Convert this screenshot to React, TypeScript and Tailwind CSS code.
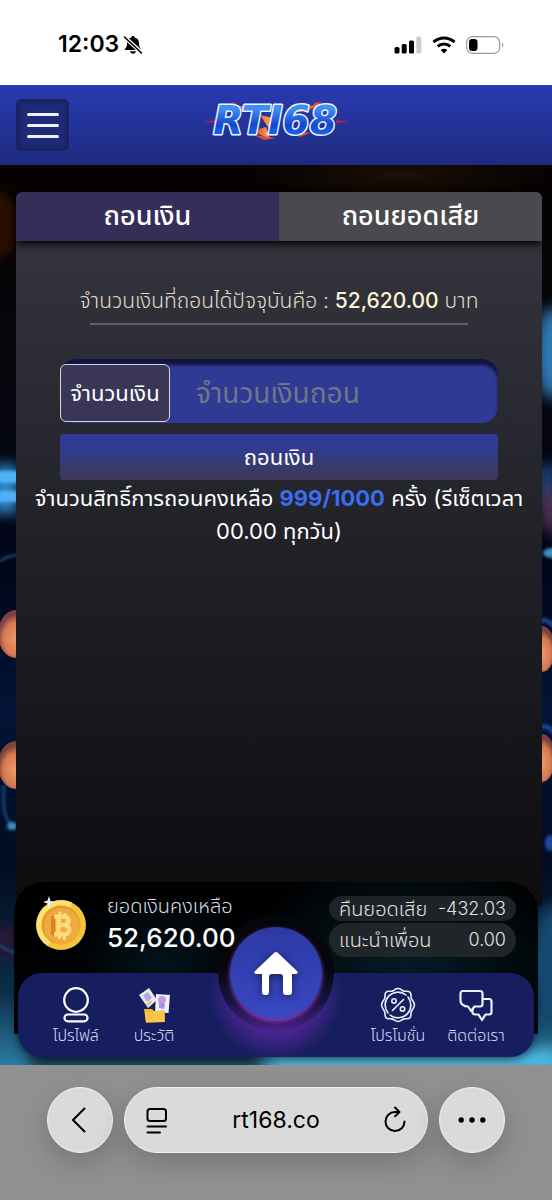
import { useState, type ReactNode } from 'react'

type NavItemProps = {
  label: string
  children: ReactNode
}

function StatusBar() {
  return (
    <div className="flex h-[85px] items-center justify-between bg-white pt-1 pr-12 pl-[58px] text-black">
      <div className="flex items-center gap-1">
        <span className="font-['Inter',sans-serif] text-[23px] font-semibold">12:03</span>
        <svg className="size-5" viewBox="0 0 20 20" fill="currentColor">
          <path d="M10 1c.9 0 1.6.6 1.7 1.4C14.5 3.1 16 5.3 16 8.3c0 3.4 1.1 4.7 2 5.6.4.4.2 1.1-.4 1.1H2.4c-.6 0-.8-.7-.4-1.1.9-.9 2-2.2 2-5.600 0-3 1.5-5.200 4.300-5.900C8.400 1.600 9.100 1 10 1zM7 16.200h6c-.3 1.500-1.500 2.500-3 2.500s-2.700-1-3-2.500z" />
          <path d="M1 1.5 19 18" stroke="#fff" strokeWidth="4" />
          <path d="M1.5 2 18.5 18" stroke="currentColor" strokeWidth="1.6" strokeLinecap="round" />
        </svg>
      </div>
      <div className="flex items-center gap-2.5">
        <svg className="h-[18px] w-7" viewBox="0 0 28 18" fill="currentColor">
          <rect x="0.5" y="11" width="5" height="6.5" rx="1.6" />
          <rect x="7.7" y="8" width="5" height="9.5" rx="1.6" />
          <rect x="15" y="4.5" width="5" height="13" rx="1.6" />
          <rect x="22.3" y="0.5" width="5" height="17" rx="1.6" opacity="0.2" />
        </svg>
        <svg className="h-[18px] w-6" viewBox="0 0 24 18" fill="none" stroke="currentColor" strokeWidth="3">
          <path d="M1.5 6.2C7.5.7 16.5.7 22.5 6.2" />
          <path d="M5.7 10.4c3.7-3.2 8.9-3.2 12.600 0" />
          <path d="M12 17.5 8.6 14c2-1.7 4.8-1.7 6.8 0z" fill="currentColor" stroke="none" />
        </svg>
        <svg className="h-[18px] w-[38px]" viewBox="0 0 38 18" fill="none">
          <rect x="0.7" y="0.7" width="33" height="16.6" rx="5.5" stroke="#999" strokeWidth="1.2" />
          <rect x="3" y="3" width="8.5" height="12" rx="3" fill="#000" />
          <path d="M36 6.5c1.600.6 1.600 4.400 0 5z" fill="#999" />
        </svg>
      </div>
    </div>
  )
}

function Logo() {
  return (
    <svg className="h-12 w-[148px]" viewBox="0 0 148 48" role="img" aria-label="RTI68">
      <defs>
        <linearGradient id="logoFill" x1="0" y1="0" x2="0" y2="1">
          <stop offset="0.25" stopColor="#3f8df5" />
          <stop offset="0.6" stopColor="#1446cf" />
          <stop offset="0.85" stopColor="#1c6cf0" />
        </linearGradient>
        <linearGradient id="logoFire" x1="0" y1="0" x2="1" y2="0">
          <stop offset="0" stopColor="#c0283f" />
          <stop offset="0.5" stopColor="#ff9a3a" />
          <stop offset="1" stopColor="#c0283f" />
        </linearGradient>
      </defs>
      <g fill="url(#logoFire)">
        <path d="M34 4c0-3-3-3-5-3 3 5 8 6 14 7l16 5-9-7c-5-1-10 0-16-2z" />
        <path d="M36 8c6-3 14-2 28 0l-14 3z" />
        <path d="M112 4c0-3 3-3 8-3-3 5-10 6-15 7l-19 5 11-7c5-1 10 0 15-2z" />
        <path d="M112 8c-6-3-14-2-28 0l14 3z" />
        <path d="M0 21l14-2v3zM148 21l-14-2v3z" fill="#b5213f" />
        <path d="M50 30l18 8-4-12zM58 14l22 5-12 10z" />
        <path d="M52 34l22 3-12 2zM88 28l20 4-10 4z" fill="#d8503a" />
      </g>
      <text
        x="73"
        y="33"
        textAnchor="middle"
        fontFamily="DejaVu Sans"
        fontWeight="700"
        fontStyle="italic"
        fontSize="39"
        fill="url(#logoFill)"
        stroke="#e9f8ff"
        strokeWidth="3"
        strokeLinejoin="round"
        paintOrder="stroke"
      >
        RTI68
      </text>
    </svg>
  )
}

function Header() {
  return (
    <header className="relative flex h-20 items-center justify-center bg-linear-to-b from-[#283ab3] to-[#1f2b80]">
      <button
        type="button"
        aria-label="เมนู"
        className="absolute left-4 flex h-[52px] w-[53px] flex-col items-center justify-center gap-2 rounded-md bg-[#1f2a78] shadow-[inset_0_0_5px_3px_#192259]"
      >
        <span className="h-[3px] w-8 rounded-full bg-[#eceffd]" />
        <span className="h-[3px] w-8 rounded-full bg-[#eceffd]" />
        <span className="h-[3px] w-8 rounded-full bg-[#eceffd]" />
      </button>
      <a href="#">
        <Logo />
      </a>
    </header>
  )
}

function Backdrop() {
  return (
    <svg className="absolute inset-0 h-full w-full" viewBox="0 0 552 900" preserveAspectRatio="none" aria-hidden="true">
      <defs>
        <linearGradient id="sceneBase" x1="0" y1="0" x2="0" y2="1">
          <stop offset="0" stopColor="#060201" />
          <stop offset="0.22" stopColor="#06060c" />
          <stop offset="0.45" stopColor="#02061a" />
          <stop offset="0.6" stopColor="#021436" />
          <stop offset="0.78" stopColor="#030c22" />
          <stop offset="0.92" stopColor="#0b2f4a" />
          <stop offset="1" stopColor="#2b7ba2" />
        </linearGradient>
        <radialGradient id="chip" cx="0.5" cy="0.6">
          <stop offset="0" stopColor="#f09a6c" />
          <stop offset="0.7" stopColor="#d47850" />
          <stop offset="1" stopColor="#7c4240" />
        </radialGradient>
        <radialGradient id="ember">
          <stop offset="0" stopColor="#1c0f05" />
          <stop offset="1" stopColor="#1c0f05" stopOpacity="0" />
        </radialGradient>
        <filter id="soft" x="-50%" y="-50%" width="200%" height="200%">
          <feGaussianBlur stdDeviation="7" />
        </filter>
        <filter id="edge">
          <feGaussianBlur stdDeviation="1.5" />
        </filter>
      </defs>
      <rect width="552" height="900" fill="url(#sceneBase)" />
      <ellipse cx="400" cy="10" rx="150" ry="26" fill="url(#ember)" />
      <g filter="url(#soft)">
        <ellipse cx="-2" cy="60" rx="20" ry="34" fill="#2a0e02" />
        <ellipse cx="552" cy="188" rx="16" ry="46" fill="#2f7ab5" />
        <rect x="-8" y="300" width="26" height="48" fill="#2f8ad0" />
        <rect x="536" y="300" width="22" height="40" fill="#123f78" />
        <ellipse cx="552" cy="345" rx="12" ry="24" fill="#4b3350" />
        <ellipse cx="4" cy="776" rx="12" ry="18" fill="#2a1830" />
        <ellipse cx="552" cy="800" rx="20" ry="60" fill="#174a70" />
        <rect x="270" y="884" width="290" height="24" fill="#4fb8dd" />
        <rect x="30" y="884" width="230" height="20" fill="#12384e" />
      </g>
      <g filter="url(#edge)">
        <rect x="-2" y="306" width="20" height="12" fill="#4fb0f5" />
        <rect x="-2" y="326" width="20" height="11" fill="#4fb0f5" />
        <path d="M0 396c6-4 12-6 18-6M0 780c8 6 12 7 18 8M4 620c-2 30 2 36 12 44" stroke="#1f5c99" strokeWidth="2" fill="none" />
        <ellipse cx="552" cy="388" rx="9" ry="5" fill="#3d8fc0" />
        <path d="M540 456c6-2 10 0 14 6M540 562c6-2 10 0 14 6" stroke="#174aa0" strokeWidth="4" fill="none" />
        <ellipse cx="12" cy="661" rx="5" ry="4" fill="#3d8fc0" />
        <ellipse cx="550" cy="678" rx="5" ry="8" fill="#1c4a9c" />
      </g>
      <ellipse cx="16" cy="469" rx="18" ry="24" fill="url(#chip)" />
      <ellipse cx="16" cy="600" rx="18" ry="24" fill="url(#chip)" />
      <ellipse cx="542" cy="484" rx="13" ry="23" fill="url(#chip)" />
      <ellipse cx="542" cy="593" rx="13" ry="24" fill="url(#chip)" />
    </svg>
  )
}

function WithdrawPanel() {
  const [tab, setTab] = useState('withdraw')
  const [amount, setAmount] = useState('')

  return (
    <section className="relative mr-2.5 ml-4 flex flex-1 flex-col">
      <div className="relative flex h-[49px] overflow-hidden rounded-t-md text-[27px] text-white shadow-[0_3px_8px_#000]">
        <button
          type="button"
          onClick={() => setTab('withdraw')}
          className={tab === 'withdraw' ? 'flex-1 bg-[#332f59] font-medium' : 'flex-1 bg-[#4a494e] font-medium'}
        >
          ถอนเงิน
        </button>
        <button
          type="button"
          onClick={() => setTab('loss')}
          className={tab === 'loss' ? 'flex-1 bg-[#332f59] font-medium' : 'flex-1 bg-[#4a494e] font-medium'}
        >
          ถอนยอดเสีย
        </button>
      </div>
      <div className="flex-1 bg-linear-to-b from-[#34343e] via-[#212128] via-45% to-[#0d0d10] px-3 pt-10 text-center text-white">
        <p className="text-[21px] leading-10 font-light text-[#e4dccb]">
          จำนวนเงินที่ถอนได้ปัจจุบันคือ : <b className="font-medium text-[#fff3d6]">52,620.00</b> บาท
        </p>
        <form className="px-8" onSubmit={(e) => e.preventDefault()}>
          <hr className="mx-[30px] mt-0.5 border-t-2 border-[#5f5f68]" />
          <div className="mt-[34px] flex h-16 rounded-2xl bg-[#2e3a93] pt-[5px] pb-px shadow-[inset_0_6px_3px_#12143f]">
            <label
              htmlFor="amount"
              className="flex w-[110px] shrink-0 items-center justify-center rounded-md border border-[#d5d4e4] bg-[#3a3657] text-[22px]"
            >
              จำนวนเงิน
            </label>
            <input
              id="amount"
              inputMode="decimal"
              value={amount}
              onChange={(e) => setAmount(e.target.value)}
              placeholder="จำนวนเงินถอน"
              className="w-full min-w-0 bg-transparent px-[26px] text-[28px] outline-none placeholder:text-[#6f7685]"
            />
          </div>
          <button
            type="submit"
            className="mt-[11px] h-[46px] w-full rounded bg-linear-to-b from-[#2f3b97] from-20% to-[#3d3857] text-[22px]"
          >
            ถอนเงิน
          </button>
        </form>
        <p className="-mx-2 mt-0.5 px-2 text-[22px] leading-[33px]">
          จำนวนสิทธิ์การถอนคงเหลือ <b className="font-bold text-[#3b6df0]">999/1000</b> ครั้ง (รีเซ็ตเวลา 00.00 ทุกวัน)
        </p>
      </div>
    </section>
  )
}

function Coin() {
  return (
    <svg className="size-[54px]" viewBox="0 0 54 54" aria-hidden="true">
      <circle cx="27" cy="29" r="25" fill="#f3c53c" />
      <path d="M5 40A25 25 0 0 1 38 6.5L14 50A25 25 0 0 1 5 40z" fill="#fbe272" />
      <circle cx="27" cy="29" r="19.5" fill="#e8982c" />
      <circle cx="28" cy="30" r="18" fill="#f0aa3c" />
      <path d="M19 20v19M19 20h9M19 39h9" stroke="#d9822a" strokeWidth="4" fill="none" />
      <g stroke="#fcdc79" strokeWidth="4.5" fill="none">
        <path d="M20 20.500h10c6 0 6 8.500 0 8.500h-6M30 29c7 0 7 9.500 0 9.500H20M24.500 20v19" />
        <path d="M26 15.500v5M31 17v4M25.500 38v5M30.500 38v6" strokeWidth="3" />
      </g>
      <path d="M15 0l1.500 5L21 6l-4.500 1.500L15 13l-1.500-5.500L9 6l4.500-1.500z" fill="#f5ecff" />
    </svg>
  )
}

function NavItem({ label, children }: NavItemProps) {
  return (
    <a href="#" className="flex w-[78px] flex-col items-center text-[#d9dcf7]">
      {children}
      <span className="text-base leading-6 font-light whitespace-nowrap">{label}</span>
    </a>
  )
}

function BottomBar() {
  return (
    <footer className="relative -mt-6 px-3.5 pb-2 text-white">
      <div className="flex justify-between rounded-t-[30px] bg-[radial-gradient(circle_at_28%_60%,#03161e,transparent_22%),radial-gradient(circle_at_75%_75%,#07202b,transparent_40%)] bg-black/95 pt-3 pr-[22px] pb-[76px] pl-5">
        <div className="flex items-start gap-[19px]">
          <div className="pt-0.5">
            <Coin />
          </div>
          <div className="relative z-10">
            <p className="text-xl leading-6 font-light text-[#d8dbe0]">ยอดเงินคงเหลือ</p>
            <p className="text-[26px] leading-10 font-medium">52,620.00</p>
          </div>
        </div>
        <dl className="flex w-[187px] flex-col gap-0.5 pt-0.5 font-light text-[#e0e3e6]">
          <div className="flex h-[25px] items-center justify-between rounded-full bg-[#1f2226] px-2.5">
            <dt className="text-xl leading-6">คืนยอดเสีย</dt>
            <dd className="text-lg leading-6">-432.03</dd>
          </div>
          <div className="flex h-[34px] items-center justify-between rounded-full bg-[#1f2529] px-2.5">
            <dt className="text-xl leading-6">แนะนำเพื่อน</dt>
            <dd className="text-lg leading-6">0.00</dd>
          </div>
        </dl>
      </div>
      <nav className="relative mx-1 -mt-[61px] flex h-[84px] justify-between rounded-3xl bg-[#171e60] bg-[radial-gradient(circle_at_50%_20px,#4a2590_40px,transparent_66px)] px-[19px] pt-3.5 shadow-[0_2px_10px_#0009]">
        <div className="flex">
          <NavItem label="โปรไฟล์">
            <svg className="h-9 w-9" viewBox="0 0 36 36" fill="none" stroke="#fff" strokeWidth="2.2">
              <circle cx="18" cy="13" r="11.8" />
              <rect x="6.5" y="27.5" width="23" height="6.8" rx="3.4" />
            </svg>
          </NavItem>
          <NavItem label="ประวัติ">
            <svg className="h-9 w-9" viewBox="0 0 36 36">
              <path d="M3 8 13 1l8 12-9 8z" fill="#ece9f5" />
              <path d="M7 8.500l5-3.500 4 6-5 4z" fill="#b5a8dc" />
              <path d="m10 17 5-3.500 1 1.500-4 4z" fill="#e6bd7a" />
              <path d="m20 7 14 1-1.500 18L19 25z" fill="#f1eef8" />
              <circle cx="26" cy="13" r="4" fill="#c79adc" />
              <path d="M23 16c2-2 5-1 6 2l-1 4-5-1z" fill="#a98fe0" />
              <path d="M8 22h8l2 2h10l1 11-19 .5z" fill="#f2b632" />
              <path d="M9 25l20-2-.5 12-18.500.5z" fill="#fac546" />
            </svg>
          </NavItem>
        </div>
        <div className="flex">
          <NavItem label="โปรโมชั่น">
            <svg className="h-9 w-9" viewBox="0 0 36 36" fill="none" stroke="#eef0ff" strokeWidth="1.6" strokeLinecap="round" strokeLinejoin="round">
              <path d="M18 1.500c3 0 3.500 2 6 2.600 2.500.5 4.500-.6 6 1.200 1.700 1.900.5 3.700 1.400 6.200.8 2.300 3 3.300 3 6.500s-2.200 4.200-3 6.500c-.9 2.500.3 4.300-1.400 6.200-1.500 1.800-3.500.7-6 1.200-2.500.6-3 2.600-6 2.600s-3.500-2-6-2.600c-2.500-.5-4.500.6-6-1.200-1.700-1.900-.5-3.700-1.400-6.200-.8-2.300-3-3.300-3-6.500s2.200-4.200 3-6.500c.9-2.500-.3-4.300 1.400-6.200 1.500-1.800 3.500-.7 6-1.200 2.500-.6 3-2.600 6-2.600z" />
              <path d="M8 26A12.800 12.800 0 0 1 26 8M28 10A12.800 12.800 0 0 1 10 28" />
              <path d="M23.500 12.500l-11 11" />
              <circle cx="14" cy="14" r="2.2" />
              <circle cx="22.5" cy="22" r="2.2" />
            </svg>
          </NavItem>
          <NavItem label="ติดต่อเรา">
            <svg className="h-9 w-9" viewBox="0 0 36 36" fill="none" stroke="#eef0ff" strokeWidth="2.2" strokeLinejoin="round">
              <path d="M5 4h17c1.700 0 2.500 1 2.500 2.500V17c0 1.700-1 2.500-2.500 2.500h-5.500L13 24l-3-4.500C6 19.500 2.500 17 2.500 14V6.500C2.500 5 3.500 4 5 4z" />
              <path d="M24.500 12H31c1.700 0 2.500 1 2.500 2.500V25c0 1.700-1 2.500-2.500 2.500h-3.500L24 33l-3.500-5.500H17c-1.700 0-2.500-1-2.500-2.500v-3" />
            </svg>
          </NavItem>
        </div>
        <a
          href="#"
          aria-label="หน้าหลัก"
          className="absolute top-0 left-1/2 flex size-[116px] -translate-x-1/2 -translate-y-1/2 items-center justify-center rounded-full bg-linear-to-b from-[#05070d] from-45% via-[#14123c] via-72% to-[#4a2088]"
        >
          <span className="flex size-[92px] items-center justify-center rounded-full bg-linear-to-b from-[#2c39a4] to-[#3a48c4] shadow-[0_2px_4px_#9a3fc0]">
            <svg className="size-11 drop-shadow-[0_2px_4px_#0008]" viewBox="0 0 44 44" fill="#fff">
              <path d="M20.500 1.600c1-.9 2-.9 3 0L43 20c1.200 1.400.7 3-1 3h-4v18c0 2-1 3-3 3h-3c-2 0-3-1-3-3V26c0-2-1-3-3-3h-8c-2 0-3 1-3 3v15c0 2-1 3-3 3h-1c-2 0-3-1-3-3V23H2c-1.700 0-2.200-1.600-1-3z" />
            </svg>
          </span>
        </a>
      </nav>
    </footer>
  )
}

function BrowserBar() {
  return (
    <div className="flex h-[135px] items-start gap-[11px] bg-[#919191] px-[47px] pt-[22px] font-['Inter',sans-serif] text-black">
      <button
        type="button"
        aria-label="ย้อนกลับ"
        className="flex size-[66px] shrink-0 items-center justify-center rounded-full border border-[#f2f2f2] bg-[#dadada] shadow-[0_10px_30px_#0003]"
      >
        <svg className="h-7 w-4" viewBox="0 0 16 28" fill="none" stroke="currentColor" strokeWidth="2" strokeLinecap="round" strokeLinejoin="round">
          <path d="M12.500 2.500 1 14l11.500 11.500" />
        </svg>
      </button>
      <div className="flex h-[66px] min-w-0 flex-1 items-center rounded-full border border-[#f2f2f2] bg-[#dadada] px-[21px] shadow-[0_10px_30px_#0003]">
        <svg className="h-7 w-[22px] shrink-0" viewBox="0 0 22 28" fill="none" stroke="currentColor" strokeWidth="2" strokeLinecap="round">
          <rect x="1.5" y="3" width="18.5" height="12" rx="2.500" />
          <path d="M1.500 20.500H20M1.500 26.500H14" />
        </svg>
        <input
          type="text"
          aria-label="ที่อยู่เว็บไซต์"
          defaultValue="rt168.co"
          className="w-full min-w-0 bg-transparent text-center text-[23px] outline-none"
        />
        <button type="button" aria-label="โหลดใหม่" className="shrink-0">
          <svg className="h-7 w-[22px]" viewBox="0 0 22 28" fill="none" stroke="currentColor" strokeWidth="2" strokeLinecap="round" strokeLinejoin="round">
            <path d="M20.500 15.500A9.500 9.500 0 1 1 11 6h4" />
            <path d="M11 1.500 15.500 6 11 10.300" />
          </svg>
        </button>
      </div>
      <button
        type="button"
        aria-label="เพิ่มเติม"
        className="flex size-[66px] shrink-0 items-center justify-center rounded-full border border-[#f2f2f2] bg-[#dadada] shadow-[0_10px_30px_#0003]"
      >
        <svg className="h-2 w-7" viewBox="0 0 28 8" fill="currentColor">
          <circle cx="3.2" cy="4" r="2.7" />
          <circle cx="14" cy="4" r="2.7" />
          <circle cx="24.8" cy="4" r="2.7" />
        </svg>
      </button>
    </div>
  )
}

export default function App() {
  return (
    <div className="flex min-h-screen flex-col bg-white font-['Inter','Noto_Sans_Thai','Noto_Sans',sans-serif]">
      <StatusBar />
      <Header />
      <main className="relative flex flex-1 flex-col overflow-hidden pt-[27px]">
        <Backdrop />
        <WithdrawPanel />
        <BottomBar />
      </main>
      <BrowserBar />
    </div>
  )
}
